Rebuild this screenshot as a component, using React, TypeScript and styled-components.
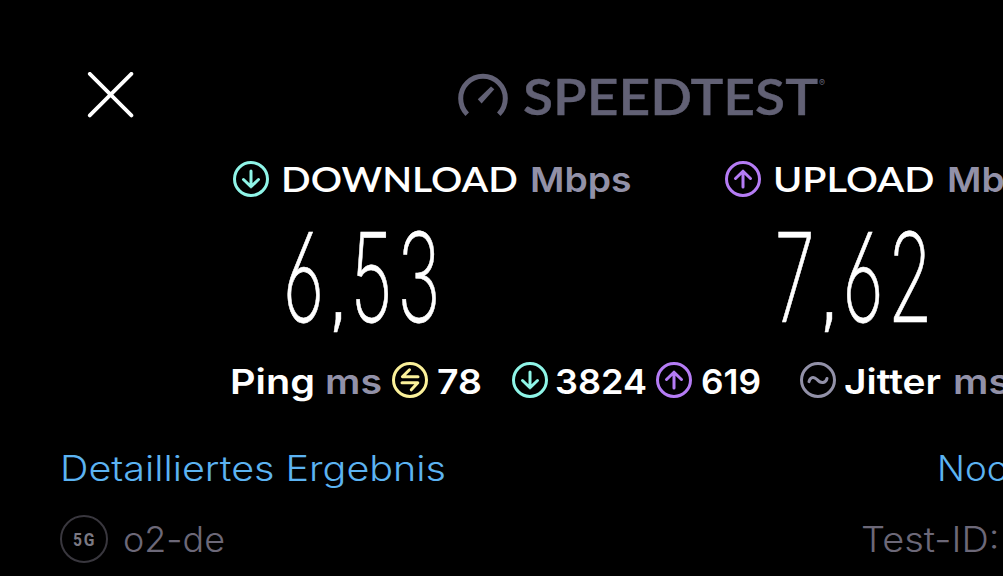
import React, { ReactNode, useLayoutEffect, useRef, useState } from "react";
import styled, { createGlobalStyle } from "styled-components";

const colors = {
  cyan: "#8ff5e8",
  purple: "#b57cf5",
  yellow: "#fbf19a",
  muted: "#9291a8",
  logo: "#626175",
  dim: "#6c6878",
  link: "#5cb3f2",
};

const GlobalStyle = createGlobalStyle`
  body {
    margin: 0;
    background: #000;
    color: #fff;
    overflow: hidden;
  }
`;

const Screen = styled.main`
  width: 1003px;
  height: 576px;
  overflow: hidden;
  background: #000;
  font-family: Inter, "Liberation Sans", sans-serif;
  display: flex;
  flex-direction: column;
`;

const Header = styled.header`
  display: flex;
  align-items: flex-start;
  height: 89px;
  padding: 72px 0 0 87px;
  flex: none;
  svg { flex: none; }
`;

const Logo = styled.div`
  display: flex;
  align-items: flex-start;
  margin-left: 323px;
  color: ${colors.logo};
`;

const Registered = styled.span`
  font-size: 9px;
  line-height: 10px;
  margin: 6px 0 0 1px;
`;

const Line = styled.div<{ $height: number; $left: number; $top?: number }>`
  display: flex;
  align-items: center;
  flex: none;
  height: ${(p) => p.$height}px;
  margin-top: ${(p) => p.$top ?? 0}px;
  padding-left: ${(p) => p.$left}px;
`;

const Group = styled.div<{ $gap?: number; $left?: number }>`
  display: flex;
  align-items: center;
  flex: none;
  gap: ${(p) => p.$gap ?? 0}px;
  margin-left: ${(p) => p.$left ?? 0}px;
`;

const Slot = styled.span<{ $width: number }>`
  display: block;
  flex: none;
  width: ${(p) => p.$width}px;
  white-space: nowrap;
`;

const Stretch = styled.span`
  display: inline-block;
  transform-origin: 0 50%;
`;

/* Widens or narrows a text so that it fills its slot exactly. */
function Fit({ width, className, children }: { width: number; className?: string; children: ReactNode }) {
  const ref = useRef<HTMLSpanElement>(null);
  const [scale, setScale] = useState(1);
  useLayoutEffect(() => {
    if (ref.current) {
      const natural = parseFloat(getComputedStyle(ref.current).width);
      setScale(width / natural);
    }
  }, [width]);
  return (
    <Slot $width={width} className={className}>
      <Stretch ref={ref} style={{ transform: `scaleX(${scale})` }}>
        {children}
      </Stretch>
    </Slot>
  );
}

const Wordmark = styled(Fit)`
  font: 600 49.5px/50px Lato, sans-serif;
  -webkit-text-stroke: 0.4px ${colors.logo};
  color: ${colors.logo};
  margin-top: -1px;
`;

const Heading = styled(Fit)`
  font: 600 35.2px/36px Lato, sans-serif;
  margin-top: -2px;
`;

const Label = styled(Fit)`
  font-size: 34.7px;
  line-height: 36px;
  font-weight: 570;
  margin-top: 2px;
`;

const Unit = styled(Label)`
  color: ${colors.muted};
`;

const HeadingUnit = styled(Unit)`
  margin-top: 0;
`;

const Value = styled(Fit)`
  font-size: 123.8px;
  line-height: 120px;
  font-weight: 200;
  -webkit-text-stroke: 0.7px #fff;
  font-feature-settings: "tnum", "cv03";
`;

const Comma = styled.span`
  display: inline-block;
  width: 36px;
  text-align: center;
  font: 400 82px/1px "DejaVu Sans", sans-serif;
`;

const LinkText = styled(Fit)`
  font-size: 34.7px;
  line-height: 36px;
  font-weight: 300;
  color: ${colors.link};
`;

const Info = styled(LinkText)`
  color: ${colors.dim};
`;

const Badge = styled.div`
  box-sizing: border-box;
  width: 48px;
  height: 48px;
  border: 2px solid #39373e;
  border-radius: 50%;
  display: flex;
  align-items: center;
  justify-content: center;
  color: #7b7983;
  font: 700 19px/20px Roboto, sans-serif;
`;

const Network = styled(Fit)`
  letter-spacing: 2px;
  margin: 2px 0 0 1px;
`;

const RoundIcon = styled.svg`
  display: block;
  flex: none;
  fill: none;
  stroke: currentColor;
  stroke-width: 3;
  stroke-linecap: round;
  stroke-linejoin: round;
`;

function Ring({ color, path }: { color: string; path: string }) {
  return (
    <RoundIcon width="36" height="36" viewBox="0 0 36 36" color={color}>
      <circle cx="18" cy="18" r="16.5" />
      <path d={path} />
    </RoundIcon>
  );
}

const DOWN = "M18 10V25.5M10.5 18.5L18 25.8L25.5 18.5";
const UP = "M18 26V10.5M10.5 17.5L18 10.2L25.5 17.5";
const SWAP = "M17.5 7.8L10.4 14.8H26M10 20.8H25.8L19.3 27.8";
const WAVE = "M9 19.6C10 15.5 13.5 13.8 17 17.5C21 22.2 26 21 27 16.4";

export default function App() {
  return (
    <Screen>
      <GlobalStyle />
      <Header>
        <svg width="47" height="47" viewBox="0 0 47 47" stroke="#fff" strokeWidth="3.8" strokeLinecap="round">
          <path d="M2.8 1.8L44.4 43.4M44.4 1.8L2.8 43.4" />
        </svg>
        <Logo>
          <svg width="52" height="46" viewBox="0 0 52 46">
            <path d="M10.2 42.2A22.3 22.3 0 1 1 41.8 42.2" fill="none" stroke={colors.logo} strokeWidth="5" />
            <path d="M20.8 27.3L34 14.4L37.3 17.3L24.6 31.5Z" fill={colors.logo} />
          </svg>
          <Group $left={14}>
            <Wordmark width={295}>SPEEDTEST</Wordmark>
          </Group>
          <Registered>®</Registered>
        </Logo>
      </Header>

      <Line $height={36} $left={233}>
        <Ring color={colors.cyan} path={DOWN} />
        <Group $left={12} $gap={11.5}>
          <Heading width={237}>DOWNLOAD</Heading>
          <HeadingUnit width={101.5}>Mbps</HeadingUnit>
        </Group>
        <Group $left={94}>
          <Ring color={colors.purple} path={UP} />
        </Group>
        <Group $left={12} $gap={12}>
          <Heading width={161.5}>UPLOAD</Heading>
          <HeadingUnit width={101.5}>Mbps</HeadingUnit>
        </Group>
      </Line>

      <Line $height={120} $top={20} $left={279.5}>
        <Value width={163}>
          6<Comma>,</Comma>53
        </Value>
        <Group $left={328.5}>
          <Value width={163}>
            7<Comma>,</Comma>62
          </Value>
        </Group>
      </Line>

      <Line $height={36} $top={25} $left={230}>
        <Group $gap={10}>
          <Label width={85}>Ping</Label>
          <Unit width={57}>ms</Unit>
          <Ring color={colors.yellow} path={SWAP} />
        </Group>
        <Group $left={8.5}>
          <Label width={45}>78</Label>
        </Group>
        <Group $left={30} $gap={7}>
          <Ring color={colors.cyan} path={DOWN} />
          <Label width={92}>3824</Label>
        </Group>
        <Group $left={9} $gap={9.5}>
          <Ring color={colors.purple} path={UP} />
          <Label width={60}>619</Label>
        </Group>
        <Group $left={38.5} $gap={8}>
          <Ring color={colors.muted} path={WAVE} />
          <Label width={97}>Jitter</Label>
        </Group>
        <Group $left={12}>
          <Unit width={57}>ms</Unit>
        </Group>
      </Line>

      <Line $height={36} $top={52} $left={60}>
        <LinkText width={386}>Detailliertes Ergebnis</LinkText>
        <Group $left={490.5}>
          <LinkText width={92}>Noch</LinkText>
        </Group>
      </Line>

      <Line $height={48} $top={29} $left={60}>
        <Badge>
          <Network width={23}>5G</Network>
        </Badge>
        <Group $left={14.5}>
          <Info width={102}>o2-de</Info>
        </Group>
        <Group $left={636.5}>
          <Info width={138.5}>Test-ID:</Info>
        </Group>
      </Line>
    </Screen>
  );
}
